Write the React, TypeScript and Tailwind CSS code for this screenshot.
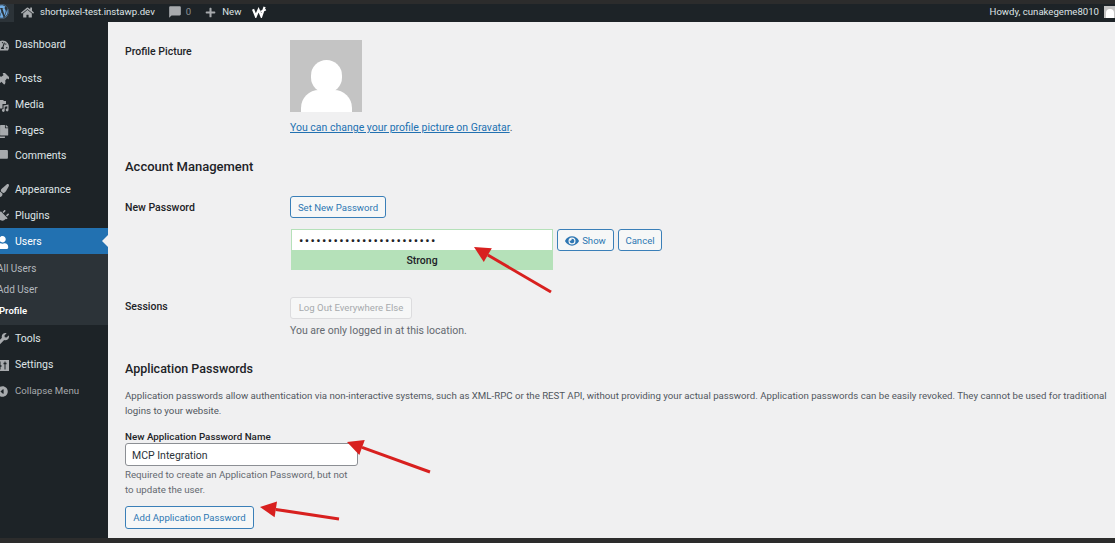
import React from 'react';
import { FaWordpress, FaHome, FaPlus, FaTachometerAlt, FaThumbtack, FaCopy, FaPaintBrush, FaPlug, FaUser, FaWrench, FaEye } from 'react-icons/fa';
import { IoCaretBackCircle } from 'react-icons/io5';
import { MdChatBubble } from 'react-icons/md';

const MediaIcon = ({ size = 13, className = '' }: { size?: number; className?: string }) => (
  <svg viewBox="0 0 13 13" width={size} height={size} className={className} fill="currentColor">
    <path d="M0 1h7l1 1h2v3H6.5v4.5H0z" />
    <path d="M7.5 6.5 L12.5 5.5 V11 a1.4 1.4 0 1 1 -1.2 -1.4 V7.2 L8.7 7.7 V11.5 a1.4 1.4 0 1 1 -1.2 -1.4 z" />
  </svg>
);

const SettingsIcon = ({ size = 13, className = '' }: { size?: number; className?: string }) => (
  <svg viewBox="0 0 13 13" width={size} height={size} className={className}>
    <rect x="0" y="1" width="13" height="11" fill="currentColor" />
    <path d="M4 2.5v8M9 2.5v8" stroke="#1d2327" strokeWidth="1" />
    <path d="M2.5 7h3M7.5 4.5h3" stroke="#1d2327" strokeWidth="1.6" />
  </svg>
);

const TiltedPin = ({ size = 13 }: { size?: number }) => <FaThumbtack size={size} className="shrink-0 rotate-45" />;
const TiltedPlug = ({ size = 13 }: { size?: number }) => <FaPlug size={size} className="shrink-0 rotate-45" />;

const MenuItem = ({ icon: Icon, label, active, className = '' }: { icon: React.ElementType; label: string; active?: boolean; className?: string }) => (
  <div className={`relative flex items-center pt-[2px] text-[10.5px] ${active ? 'bg-[#2271b1] text-white' : 'text-[#dfe3e6]'} ${className || 'h-[26px]'}`}>
    <span className={`w-[9px] shrink-0 flex justify-end overflow-hidden ${active ? 'text-white' : 'text-[#a7aaad]'}`}>
      <Icon size={13} className="shrink-0" />
    </span>
    <span className="ml-[6px]">{label}</span>
    {active && <span className="absolute right-0 top-[7px] border-y-[6px] border-y-transparent border-r-[6px] border-r-[#f0f0f1]" />}
  </div>
);

const SubItem = ({ label, current }: { label: string; current?: boolean }) => (
  <div className={`h-[21.5px] flex items-center -ml-[3px] ${current ? 'font-semibold text-[9.5px] text-white pl-[2px]' : 'text-[10px] text-[#b4b9be]'}`}>{label}</div>
);

const Button = ({ children, className = '' }: { children: React.ReactNode; className?: string }) => (
  <div className={`flex items-center justify-center whitespace-nowrap rounded-[3px] border border-[#3a7fb8] bg-[#f6f7f7] pt-[2px] text-[#2e77b3] text-[9.6px] ${className || 'h-[22px]'}`}>{children}</div>
);

const Arrow = ({ x1, y1, x2, y2 }: { x1: number; y1: number; x2: number; y2: number }) => {
  const a = Math.atan2(y2 - y1, x2 - x1);
  const back = 16;
  const bx = x2 - back * Math.cos(a);
  const by = y2 - back * Math.sin(a);
  const nx = -Math.sin(a) * 8;
  const ny = Math.cos(a) * 8;
  return (
    <>
      <line x1={x1} y1={y1} x2={bx} y2={by} stroke="#d8201f" strokeWidth="3" />
      <polygon points={`${x2},${y2} ${bx + nx},${by + ny} ${bx - nx},${by - ny}`} fill="#d8201f" />
    </>
  );
};

export default function App() {
  return (
    <div className="relative w-[1115px] h-[543px] overflow-hidden flex flex-col bg-[#f0f0f1] text-[#1d2327] font-['Roboto','Noto_Sans',sans-serif]">
      <div className="h-[4px] bg-[#2c2c2c] shrink-0" />
      <header className="h-[18px] shrink-0 bg-[#1d2327] pb-[2px] flex items-center text-[9.6px] text-[#dfe3e6]">
        <span className="w-[14px] h-[18px] -mb-[2px] bg-[#2c3338] flex items-center overflow-hidden pb-[3px]">
          <FaWordpress size={15} className="shrink-0 -ml-[6px] text-[#72aee6]" />
        </span>
        <FaHome size={13} className="ml-[7px] text-[#a7aaad]" />
        <span className="ml-[6px]">shortpixel-test.instawp.dev</span>
        <MdChatBubble size={14} className="ml-[13px] text-[#a7aaad]" />
        <span className="ml-[4px] text-[#8c8f94]">0</span>
        <FaPlus size={11} className="ml-[14px] text-[#a7aaad]" />
        <span className="ml-[6px]">New</span>
        <svg viewBox="0 0 16 13" className="ml-[11px] w-[15px] h-[12px]" fill="none" stroke="#fff">
          <path d="M1 3.5 L4 11 L7 4 L10 11 L13.5 1" strokeWidth="2.4" />
          <path d="M9 6 L15 4" strokeWidth="1.6" />
        </svg>
        <span className="ml-auto">Howdy, cunakegeme8010</span>
        <span className="ml-[5px] -mr-px w-[12px] h-[12px] bg-[#c4c4c4] flex items-end justify-center overflow-hidden">
          <span className="w-[8px] h-[9px] rounded-t-full bg-white" />
        </span>
      </header>

      <div className="flex flex-1 min-h-0">
        <aside className="w-[108px] shrink-0 bg-[#1d2327] pt-[9px]">
          <MenuItem icon={FaTachometerAlt} label="Dashboard" className="h-[26px] mb-[8px]" />
          <MenuItem icon={TiltedPin} label="Posts" />
          <MenuItem icon={MediaIcon} label="Media" />
          <MenuItem icon={FaCopy} label="Pages" />
          <MenuItem icon={MdChatBubble} label="Comments" className="h-[23px] mb-[10px]" />
          <MenuItem icon={FaPaintBrush} label="Appearance" />
          <MenuItem icon={TiltedPlug} label="Plugins" />
          <MenuItem icon={FaUser} label="Users" active />
          <div className="bg-[#2c3338] h-[71px] pt-[3.5px]">
            <SubItem label="All Users" />
            <SubItem label="Add User" />
            <SubItem label="Profile" current />
          </div>
          <MenuItem icon={FaWrench} label="Tools" />
          <MenuItem icon={SettingsIcon} label="Settings" />
          <div className="flex items-center h-[26px] pt-[3px] text-[9.7px] text-[#a7aaad]">
            <span className="w-[9px] shrink-0 flex justify-end overflow-hidden"><IoCaretBackCircle size={13} className="shrink-0" /></span>
            <span className="ml-[6px]">Collapse Menu</span>
          </div>
        </aside>

        <main className="flex-1 min-w-0 pl-[17px] pr-[4px] pt-[18px] text-[10.5px]">
          <section className="flex">
            <div className="w-[165px] pt-[4px] font-medium leading-[15px]">Profile Picture</div>
            <div>
              <div className="w-[72px] h-[72px] bg-[#c4c4c4] overflow-hidden flex flex-col items-center">
                <span className="mt-[20px] w-[31px] h-[33px] rounded-full bg-white shrink-0" />
                <span className="-mt-[3px] w-[51px] h-[23px] rounded-t-[18px] bg-white shrink-0" />
              </div>
              <p className="mt-[8px] leading-[15px] text-[#50575e]"><span className="text-[#2271b1] underline">You can change your profile picture on Gravatar</span>.</p>
            </div>
          </section>

          <h2 className="mt-[23px] text-[13px] font-medium leading-[18px]">Account Management</h2>

          <section className="flex mt-[20px]">
            <div className="w-[165px] pt-[4px] font-medium leading-[15px]">New Password</div>
            <div>
              <Button className="h-[22px] w-[96px]">Set New Password</Button>
              <div className="mt-[11px] ml-[1px] flex items-start">
                <div className="w-[262px] border border-[#b5e1b9]">
                  <div className="h-[20px] bg-white flex items-center pl-[7px] text-[#1d2327] text-[13px] tracking-[1.35px] leading-none">••••••••••••••••••••••••</div>
                  <div className="h-[19px] bg-[#b5e1b9] pt-[2px] flex items-center justify-center font-medium text-[10.5px]">Strong</div>
                </div>
                <Button className="h-[22px] ml-[4px] w-[57px] gap-[3px]"><FaEye size={14} />Show</Button>
                <Button className="h-[22px] ml-[4px] w-[44px]">Cancel</Button>
              </div>
            </div>
          </section>

          <section className="flex mt-[27px]">
            <div className="w-[165px] pt-[2px] font-medium leading-[15px]">Sessions</div>
            <div>
              <div className="w-[122px] h-[22px] flex items-center justify-center whitespace-nowrap rounded-[3px] border border-[#dcdcde] bg-[#f6f7f7] pt-px text-[#a7aaad] text-[9.6px]">Log Out Everywhere Else</div>
              <p className="mt-[4px] leading-[15px] text-[#646970]">You are only logged in at this location.</p>
            </div>
          </section>

          <h2 className="mt-[22px] text-[12.5px] font-medium leading-[18px]">Application Passwords</h2>
          <p className="mt-[10px] text-[9.68px] leading-[15px] text-[#50575e]">Application passwords allow authentication via non-interactive systems, such as XML-RPC or the REST API, without providing your actual password. Application passwords can be easily revoked. They cannot be used for traditional logins to your website.</p>

          <div className="mt-[13px] font-medium text-[9.8px] leading-[12px]">New Application Password Name</div>
          <div className="w-[233px] h-[23px] flex items-center pl-[6px] pt-[2px] bg-white border border-[#8c8f94] rounded-[3px] text-[10.5px] text-[#2c3338]">MCP Integration</div>
          <p className="mt-px w-[233px] text-[9.7px] leading-[15px] text-[#646970]">Required to create an Application Password, but not to update the user.</p>
          <Button className="mt-[9px] w-[129px] h-[23px]">Add Application Password</Button>
        </main>
      </div>
      <div className="h-[5px] bg-[#2c2c2c] shrink-0" />

      <svg className="absolute inset-0 pointer-events-none" width="1115" height="543">
        <Arrow x1={551} y1={292} x2={474} y2={247} />
        <Arrow x1={430} y1={472} x2={347} y2={442} />
        <Arrow x1={339} y1={519} x2={260} y2={507} />
      </svg>
    </div>
  );
}
